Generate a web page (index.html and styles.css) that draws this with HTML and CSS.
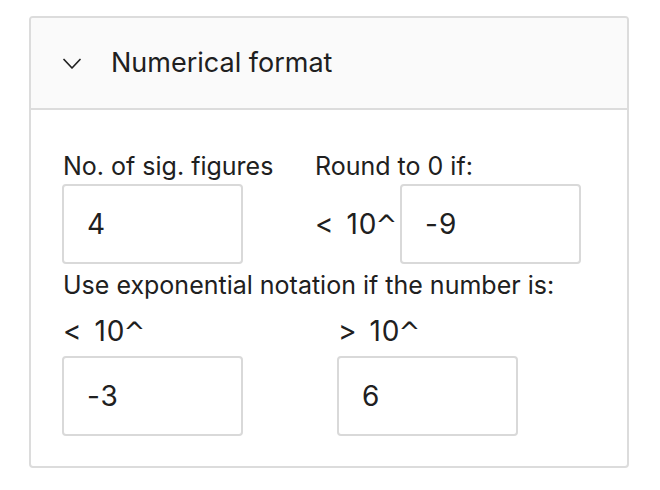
FILE: index.html
```html
<!DOCTYPE html>
<html>
<head>
<meta charset="utf-8">
<link rel="stylesheet" href="styles.css">
</head>
<body>
<div class="card">
  <div class="header">
    <svg class="chev" width="18" height="12" viewBox="0 0 18 12"><path d="M1 1.5 L9 10 L17 1.5" fill="none" stroke="#222" stroke-width="1.7" stroke-linecap="round" stroke-linejoin="round"/></svg>
    <span class="title">Numerical format</span>
  </div>
  <div class="body">
    <div class="row1">
      <div class="colA">
        <div class="label">No. of sig. figures</div>
        <div class="input">4</div>
      </div>
      <div class="colB">
        <div class="label">Round to 0 if:</div>
        <div class="inline">
          <span class="pre">&lt; 10<span class="caret">^</span></span>
          <div class="input">-9</div>
        </div>
      </div>
    </div>
    <div class="label wide">Use exponential notation if the number is:</div>
    <div class="row3">
      <div class="colC">
        <div class="label pow">&lt; 10<span class="caret">^</span></div>
        <div class="input">-3</div>
      </div>
      <div class="colC">
        <div class="label pow">&gt; 10<span class="caret">^</span></div>
        <div class="input">6</div>
      </div>
    </div>
  </div>
</div>
</body>
</html>
```
FILE: styles.css
```css
html, body {
  margin: 0;
  padding: 0;
  background: #ffffff;
}
body {
  font-family: Inter, "Noto Sans", sans-serif;
  color: #202020;
}
.card {
  margin: 16px 0 0 29px;
  width: 596px;
  height: 448px;
  border: 2px solid #dcdcdc;
  border-radius: 4px;
  overflow: hidden;
}
.header {
  height: 90px;
  background: #fafafa;
  border-bottom: 2px solid #dcdcdc;
  display: flex;
  align-items: center;
  padding-left: 32px;
}
.chev {
  display: block;
  margin-top: 2px;
}
.title {
  font-size: 27px;
  margin-left: 30px;
  line-height: 32px;
}
.body {
  padding: 41px 0 0 31px;
}
.label {
  font-size: 25px;
  line-height: 30px;
  white-space: nowrap;
}
.pow {
  font-size: 28px;
  height: 30px;
  letter-spacing: 1px;
  word-spacing: 3px;
}
.caret {
  font-family: "DejaVu Sans", sans-serif;
  font-size: 26px;
  line-height: 0;
  letter-spacing: 0;
  margin-left: -2px;
}
.row1 {
  display: flex;
}
.colA {
  width: 253px;
}
.colA .label {
  margin-left: 1px;
  margin-bottom: 3px;
}
.colB .label {
  margin-bottom: 3px;
}
.inline {
  display: flex;
  align-items: center;
}
.pre {
  font-size: 28px;
  letter-spacing: 1px;
  word-spacing: 3px;
  line-height: 30px;
  margin-right: 2px;
  width: 83px;
  white-space: nowrap;
}
.input {
  box-sizing: border-box;
  width: 181px;
  height: 80px;
  border: 2px solid #d9d9d9;
  border-radius: 4px;
  display: flex;
  align-items: center;
  padding-left: 23px;
  font-size: 28px;
  letter-spacing: 1px;
  background: #fff;
}
.wide {
  margin-top: 6px;
  margin-left: 1px;
}
.row3 {
  display: flex;
  margin-top: 16px;
}
.colC {
  width: 275px;
}
.colC .label {
  margin-left: 1px;
  margin-bottom: 10px;
}
```
